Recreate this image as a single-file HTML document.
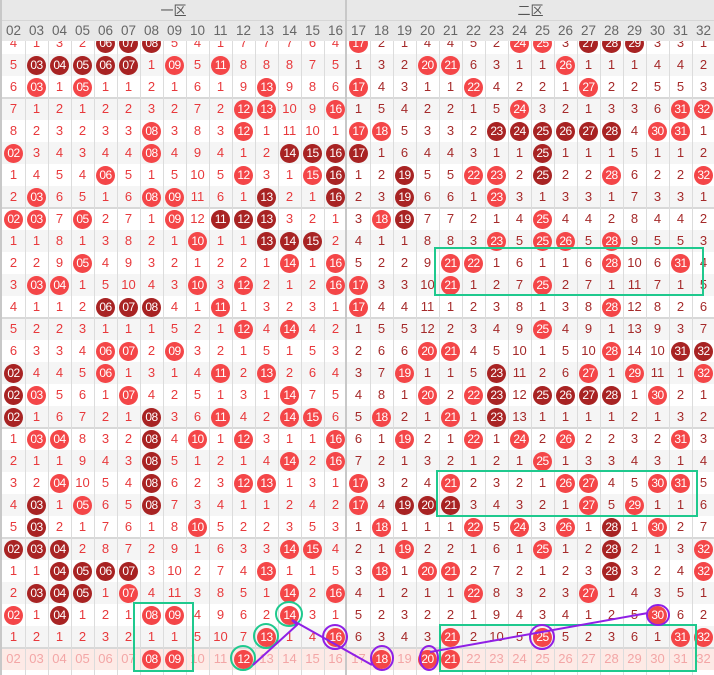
<!DOCTYPE html>
<html><head><meta charset="utf-8">
<style>
*{margin:0;padding:0;box-sizing:border-box}
body{width:714px;height:675px;overflow:hidden;background:#fff;position:relative;font-family:"Liberation Sans","DejaVu Sans",sans-serif}
.c{position:absolute;width:23px;height:22px;line-height:22px;text-align:center;font-size:13px}
.b{position:absolute;width:19px;height:19px;border-radius:50%;left:2px;top:1.5px;line-height:19px;color:#fff;font-size:12px;letter-spacing:-0.5px}
.r{background:#f44648}.d{background:#a82323}
.row{position:absolute;left:0;width:714px;height:22px}
.hd{position:absolute;left:0;width:714px;background:#e8e8e8;z-index:5}
.vl{position:absolute;top:21px;width:1px;height:654px;background:#dcdcdc;z-index:2}
.hl{position:absolute;left:0;width:714px;height:2px;background:#d8d8d8;z-index:1}
</style></head><body>
<div class="hd" style="top:0;height:21px;border-bottom:1px solid #d6d6d6">
<div style="position:absolute;left:2px;width:343px;text-align:center;line-height:21px;font-size:13px;color:#555;font-family:'Liberation Sans','Noto Sans CJK SC',sans-serif">一区</div>
<div style="position:absolute;left:347px;width:367px;text-align:center;line-height:21px;font-size:13px;color:#555;font-family:'Liberation Sans','Noto Sans CJK SC',sans-serif">二区</div>
</div>
<div class="hd" id="ch" style="top:21px;height:20px"></div>
<div id="g"></div>
<svg style="position:absolute;left:0;top:0;z-index:6" width="714" height="675">
<g fill="none" stroke="#1fc98e" stroke-width="2">
<rect x="435" y="248" width="268" height="47"/>
<rect x="437" y="471" width="260" height="45"/>
<rect x="440" y="625" width="256" height="46"/>
<rect x="134" y="603" width="59" height="68"/>
<ellipse cx="289" cy="614" rx="13" ry="12"/>
<ellipse cx="266" cy="636" rx="12" ry="12"/>
<ellipse cx="243" cy="658" rx="12" ry="12"/>
</g>
<g fill="none" stroke="#8f1fe6" stroke-width="2">
<ellipse cx="335" cy="637" rx="12" ry="12"/>
<ellipse cx="382" cy="658" rx="11" ry="12"/>
<ellipse cx="429" cy="658" rx="9" ry="12"/>
<ellipse cx="542" cy="637" rx="12" ry="12"/>
<ellipse cx="658" cy="615" rx="11" ry="10"/>
<polyline points="253,665 297,625 292,620 372,665"/>
<line x1="430" y1="652" x2="648" y2="613"/>
</g>
</svg>
<script>
(function(){
var rows=[
"4 1 3 2 d d d 5 4 1 7 7 7 6 4 r 2 1 4 4 5 2 r r 3 d d d 3 3 1",
"5 d d d d d 1 r 5 r 8 8 8 7 5 1 3 2 r r 6 3 1 1 r 1 1 1 4 4 2",
"6 r 1 r 1 1 2 1 6 1 9 r 9 8 6 r 4 3 1 1 r 4 2 2 1 r 2 2 5 5 3",
"7 1 2 1 2 2 3 2 7 2 r r 10 9 r 1 5 4 2 2 1 5 r 3 2 1 3 3 6 r r",
"8 2 3 2 3 3 r 3 8 3 r 1 11 10 1 r r 5 3 3 2 d d d d d d 4 r r 1",
"r 3 4 3 4 4 r 4 9 4 1 2 d d d d 1 6 4 4 3 1 1 d 1 1 1 5 1 1 2",
"1 4 5 4 r 5 1 5 10 5 r 3 1 r d 1 2 d 5 5 r r 2 d 2 2 r 6 2 2 r",
"2 r 6 5 1 6 r r 11 6 1 d 2 1 d 2 3 d 6 6 1 r 3 1 3 3 1 7 3 3 1",
"r r 7 r 2 7 1 r 12 d d d 3 2 1 3 r d 7 7 2 1 4 r 4 4 2 8 4 4 2",
"1 1 8 1 3 8 2 1 r 1 1 d d d 2 4 1 1 8 8 3 r 5 r r 5 r 9 5 5 3",
"2 2 9 r 4 9 3 2 1 2 2 1 r 1 r 5 2 2 9 r r 1 6 1 1 6 r 10 6 r 4",
"3 r r 1 5 10 4 3 r 3 r 2 1 2 r r 3 3 10 r 1 2 7 r 2 7 1 11 7 1 5",
"4 1 1 2 d d d 4 1 r 1 3 2 3 1 r 4 4 11 1 2 3 8 1 3 8 r 12 8 2 6",
"5 2 2 3 1 1 1 5 2 1 r 4 r 4 2 1 5 5 12 2 3 4 9 r 4 9 1 13 9 3 7",
"6 3 3 4 r r 2 r 3 2 1 5 1 5 3 2 6 6 r r 4 5 10 1 5 10 r 14 10 d d",
"d 4 4 5 r 1 3 1 4 r 2 r 2 6 4 3 7 r 1 1 5 d 11 2 6 r 1 r 11 1 r",
"d r 5 6 1 r 4 2 5 1 3 1 r 7 5 4 8 1 r 2 r d 12 d d d d 1 r 2 1",
"d 1 6 7 2 1 d 3 6 r 4 2 r r 6 5 r 2 1 r 1 d 13 1 1 1 1 2 1 3 2",
"1 r r 8 3 2 d 4 r 1 r 3 1 1 r 6 1 r 2 1 r 1 r 2 r 2 2 3 2 r 3",
"2 1 1 9 4 3 d 5 1 2 1 4 r 2 r 7 2 1 3 2 1 2 1 r 1 3 3 4 3 1 4",
"3 2 r 10 5 4 d 6 2 3 r r 1 3 1 r 3 2 4 r 2 3 2 1 r r 4 5 r r 5",
"4 d 1 r 6 5 d 7 3 4 1 1 2 4 2 r 4 d d d 3 4 3 2 1 r 5 r 1 1 6",
"5 d 2 1 7 6 1 8 r 5 2 2 3 5 3 1 r 1 1 1 r 5 r 3 r 1 d 1 r 2 7",
"d d d 2 8 7 2 9 1 6 3 3 r r 4 2 1 r 2 2 1 6 1 r 1 2 d 2 1 3 r",
"1 1 d d d d 3 10 2 7 4 r 1 1 5 3 r 1 r r 2 7 2 1 2 3 d 3 2 4 r",
"2 d d d 1 r 4 11 3 8 5 1 r 2 r 4 1 2 1 1 r 8 3 2 3 r 1 4 3 5 1",
"r 1 d 1 2 1 r r 4 9 6 2 r 3 1 5 2 3 2 2 1 9 4 3 4 1 2 5 r 6 2",
"1 2 1 2 3 2 1 1 5 10 7 r 1 4 r 6 3 4 3 r 2 10 5 r 5 2 3 6 1 r r",
"f f f f f f r r f f r f f f f f r f r r f f f f f f f f f f f"
];
var h='';
function nm(i){var n=i+2;return (n<10?'0':'')+n;}
var ch='';
for(var i=0;i<31;i++){ch+='<div class="c" style="left:'+(2+23*i)+'px;top:-1px;color:#666;font-size:13.5px">'+nm(i)+'</div>';}
document.getElementById('ch').innerHTML=ch;
for(var r=0;r<rows.length;r++){
 var t=rows[r].split(' '),ty=32+22*r;
 var bg=(r%2==1)?'#f5f5f5':'#fff';
 if(r==28)bg='#fdeae6';
 h+='<div class="row" style="top:'+ty+'px;background:'+bg+'">';
 for(var i=0;i<31;i++){
  var v=t[i],col=i<15?'#e8393c':'#a52a2a',x=2+23*i;
  if(v=='r'||v=='d'){h+='<div class="c" style="left:'+x+'px"><div class="b '+v+'">'+nm(i)+'</div></div>';}
  else if(v=='f'){h+='<div class="c" style="left:'+x+'px;color:#f3a6a6">'+nm(i)+'</div>';}
  else h+='<div class="c" style="left:'+x+'px;color:'+col+'">'+v+'</div>';
 }
 h+='</div>';
}
for(var i=1;i<31;i++){ if(i==15)continue; h+='<div class="vl" style="left:'+(2+23*i)+'px"></div>';}
h+='<div style="position:absolute;left:345px;top:0;width:2px;height:675px;background:#c8c8c8;z-index:6"></div>';
h+='<div style="position:absolute;left:0;top:0;width:2px;height:675px;background:#c8c8c8;z-index:6"></div>';
[97,207,317,427,537,647].forEach(function(y){h+='<div class="hl" style="top:'+y+'px"></div>';});
document.getElementById('g').innerHTML=h;
})();
</script>
</body></html>
